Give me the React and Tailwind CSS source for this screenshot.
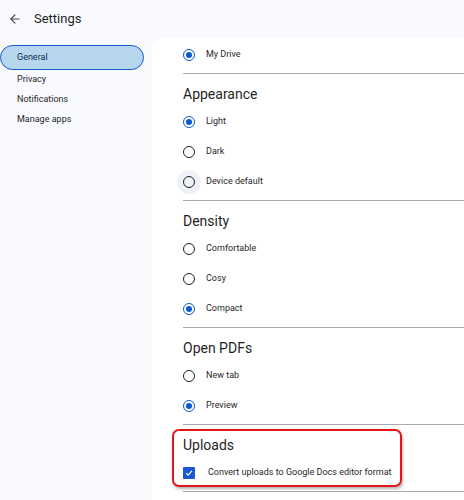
import { ArrowLeft } from 'lucide-react';

const font = { fontFamily: 'Roboto, "Liberation Sans", sans-serif' };

const Radio = ({ checked, halo }) => (
  <span className="relative flex items-center justify-center w-[12px] h-[12px]">
    {halo && <span className="absolute w-[24px] h-[24px] rounded-full bg-[#eef1f7]" />}
    <span
      className={`relative flex items-center justify-center w-[12px] h-[12px] rounded-full border-[1.5px] ${
        checked ? 'border-[#0b57d0]' : 'border-[#1f1f1f]'
      }`}
    >
      {checked && <span className="w-[6px] h-[6px] rounded-full bg-[#0b57d0]" />}
    </span>
  </span>
);

const Option = ({ label, checked, halo }) => (
  <div className="flex items-center h-[30px] gap-[11px]">
    <Radio checked={checked} halo={halo} />
    <span className="text-[9px] text-[#1f1f1f]">{label}</span>
  </div>
);

const Divider = () => <div className="mt-[3px] h-px bg-[#a8abaf]" />;

const Heading = ({ children }) => (
  <h2 className="pt-[10px] pb-[3px] text-[14px] leading-[20px] text-[#1f1f1f]">{children}</h2>
);

const Section = ({ title, options }) => (
  <div>
    <Heading>{title}</Heading>
    {options.map((o) => (
      <Option key={o.label} {...o} />
    ))}
    <Divider />
  </div>
);

export default function App() {
  return (
    <div className="w-[464px] h-[500px] overflow-hidden bg-[#f8fafd] flex flex-col" style={font}>
      <header className="h-[38px] flex items-center shrink-0">
        <ArrowLeft className="ml-[8px] w-[14px] h-[14px] text-[#444746]" strokeWidth={2} />
        <span className="ml-[12px] text-[13px] text-[#1f1f1f]">Settings</span>
      </header>

      <div className="flex flex-1 min-h-0">
        <nav className="w-[152px] shrink-0 pt-[7px]">
          <div className="w-[144px] h-[25px] flex items-center pl-[16px] rounded-full bg-[#b7d7ef] border-[1.5px] border-[#1b57d3] text-[9px] text-[#0b2a52]">
            General
          </div>
          <ul className="text-[9px] text-[#1f1f1f]">
            {['Privacy', 'Notifications', 'Manage apps'].map((item) => (
              <li key={item} className="h-[20px] flex items-center pl-[17px]">
                {item}
              </li>
            ))}
          </ul>
        </nav>

        <main className="flex-1 bg-white rounded-tl-[14px] pl-[31px] pt-[2px]">
          <Option label="My Drive" checked />
          <Divider />

          <Section
            title="Appearance"
            options={[
              { label: 'Light', checked: true },
              { label: 'Dark' },
              { label: 'Device default', halo: true },
            ]}
          />
          <Section
            title="Density"
            options={[{ label: 'Comfortable' }, { label: 'Cosy' }, { label: 'Compact', checked: true }]}
          />
          <Section title="Open PDFs" options={[{ label: 'New tab' }, { label: 'Preview', checked: true }]} />

          <div className="relative">
            <Heading>Uploads</Heading>
            <div className="flex items-center h-[30px] gap-[13px]">
              <span className="flex items-center justify-center w-[12px] h-[12px] rounded-[1px] bg-[#1a57d6]">
                <svg viewBox="0 0 12 12" className="w-[10px] h-[10px]" fill="none">
                  <path d="M2.5 6.2 L5 8.5 L9.5 3.5" stroke="white" strokeWidth="1.4" />
                </svg>
              </span>
              <span className="text-[9px] text-[#1f1f1f]">Convert uploads to Google Docs editor format</span>
            </div>
            <Divider />
            <div className="absolute left-[-11px] top-[4px] w-[230px] h-[58px] border-2 border-[#e3161b] rounded-[7px] shadow-[1px_2px_3px_rgba(0,0,0,0.3)]" />
          </div>
        </main>
      </div>
    </div>
  );
}
